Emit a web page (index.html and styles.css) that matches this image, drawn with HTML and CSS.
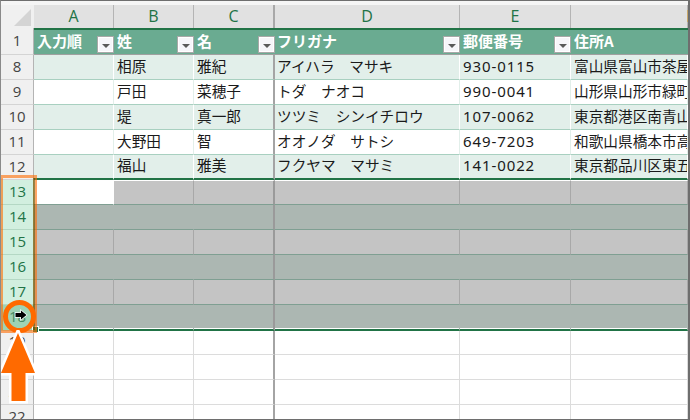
FILE: index.html
```html
<!DOCTYPE html>
<html lang="ja">
<head>
<meta charset="utf-8">
<title>Sheet</title>
<link rel="stylesheet" href="styles.css">
</head>
<body>
<div class="sheet">
  <div class="row head-row">
    <div class="rh corner"><svg class="corner-tri" width="17" height="17" viewBox="0 0 17 17"><path d="M17 0V17H0Z" fill="#d4d4d4"/></svg></div>
    <div class="c colh">A</div><div class="c colh">B</div><div class="c colh fz">C</div><div class="c colh">D</div><div class="c colh">E</div><div class="c colh"></div>
  </div>
  <div class="row title-row">
    <div class="rh">1</div>
    <div class="c tc">入力順<span class="fb"><i></i></span></div>
    <div class="c tc">姓<span class="fb"><i></i></span></div>
    <div class="c tc fz">名<span class="fb"><i></i></span></div>
    <div class="c tc kana">フリガナ<span class="fb"><i></i></span></div>
    <div class="c tc">郵便番号<span class="fb"><i></i></span></div>
    <div class="c tc">住所A</div>
  </div>
  <div class="row odd"><div class="rh">8</div><div class="c"></div><div class="c">相原</div><div class="c fz">雅紀</div><div class="c kana">アイハラ　マサキ</div><div class="c num">930-0115</div><div class="c">富山県富山市茶屋</div></div>
  <div class="row even"><div class="rh">9</div><div class="c"></div><div class="c">戸田</div><div class="c fz">菜穂子</div><div class="c kana">トダ　ナオコ</div><div class="c num">990-0041</div><div class="c">山形県山形市緑町</div></div>
  <div class="row odd"><div class="rh">10</div><div class="c"></div><div class="c">堤</div><div class="c fz">真一郎</div><div class="c kana">ツツミ　シンイチロウ</div><div class="c num">107-0062</div><div class="c">東京都港区南青山</div></div>
  <div class="row even"><div class="rh">11</div><div class="c"></div><div class="c">大野田</div><div class="c fz">智</div><div class="c kana">オオノダ　サトシ</div><div class="c num">649-7203</div><div class="c">和歌山県橋本市高</div></div>
  <div class="row odd last"><div class="rh">12</div><div class="c"></div><div class="c">福山</div><div class="c fz">雅美</div><div class="c kana">フクヤマ　マサミ</div><div class="c num">141-0022</div><div class="c">東京都品川区東五</div></div>
  <div class="row sel lt first"><div class="rh on">13</div><div class="c active"></div><div class="c"></div><div class="c fz"></div><div class="c"></div><div class="c"></div><div class="c"></div></div>
  <div class="row sel dk"><div class="rh on">14</div><div class="c"></div><div class="c"></div><div class="c fz"></div><div class="c"></div><div class="c"></div><div class="c"></div></div>
  <div class="row sel lt"><div class="rh on">15</div><div class="c"></div><div class="c"></div><div class="c fz"></div><div class="c"></div><div class="c"></div><div class="c"></div></div>
  <div class="row sel dk"><div class="rh on">16</div><div class="c"></div><div class="c"></div><div class="c fz"></div><div class="c"></div><div class="c"></div><div class="c"></div></div>
  <div class="row sel lt"><div class="rh on">17</div><div class="c"></div><div class="c"></div><div class="c fz"></div><div class="c"></div><div class="c"></div><div class="c"></div></div>
  <div class="row sel dk endsel"><div class="rh on hot">18</div><div class="c"></div><div class="c"></div><div class="c fz"></div><div class="c"></div><div class="c"></div><div class="c"></div></div>
  <div class="row blank b19"><div class="rh">19</div><div class="c"></div><div class="c"></div><div class="c fz"></div><div class="c"></div><div class="c"></div><div class="c"></div></div>
  <div class="row blank"><div class="rh">20</div><div class="c"></div><div class="c"></div><div class="c fz"></div><div class="c"></div><div class="c"></div><div class="c"></div></div>
  <div class="row blank"><div class="rh">21</div><div class="c"></div><div class="c"></div><div class="c fz"></div><div class="c"></div><div class="c"></div><div class="c"></div></div>
  <div class="row blank"><div class="rh">22</div><div class="c"></div><div class="c"></div><div class="c fz"></div><div class="c"></div><div class="c"></div><div class="c"></div></div>
  <div class="tick"></div>
  <div class="handle"></div>
  <div class="hl"></div>
  <div class="circle"></div>
  <svg class="cursor" width="14" height="12" viewBox="0 0 14 12"><path d="M1.5 4H7V1.5L12.5 6L7 10.5V8H1.5Z" fill="#000" stroke="#fff" stroke-width="1.4" paint-order="stroke"/></svg>
  <svg class="arrow" width="37" height="75" viewBox="0 0 37 75"><path d="M18 3L35 43H25.5V71H11.5V43H1Z" fill="#ff6a00" stroke="#fff" stroke-width="5" stroke-linejoin="miter" paint-order="stroke"/></svg>
</div>
</body>
</html>
```
FILE: styles.css
```css
* { box-sizing: border-box; }
html, body { margin: 0; padding: 0; }
body { width: 690px; height: 420px; overflow: hidden; background: #fff; font-family: "Noto Sans CJK JP", "Noto Sans", sans-serif; }
.sheet { position: relative; width: 690px; height: 420px; padding-top: 4px; border-top: 1px solid #6e6e6e; border-left: 1px solid #8a8a8a; border-right: 2px solid #6e6e6e; border-bottom: 1px solid #6e6e6e; overflow: hidden; background: #f5f5f5; }
.row { display: grid; grid-template-columns: 33px 80px 80px 81px 185px 111px 1fr; height: 25px; font-size: 14.67px; color: #1a1a1a; background: #fff; }
.rh { display: flex; align-items: center; justify-content: center; padding-bottom: 3px; background: #f0f0f0; border-right: 1px solid #b4b4b4; border-bottom: 1px solid #d4d4d4; font-family: "Open Sans", sans-serif; font-size: 15px; color: #444; }
.c { display: flex; align-items: center; padding-left: 3px; padding-bottom: 2px; border-right: 1px solid #d8d8d8; border-bottom: 1px solid #d8d8d8; white-space: nowrap; overflow: hidden; position: relative; line-height: 1; }
.kana { padding-left: 2px; }
.fz { border-right: 2px solid #a4a4a4; }
.head-row { height: 23px; }
.corner { background: #f0f0f0; border-right: 0; border-bottom: 0; align-items: flex-start; justify-content: flex-start; padding: 4px 0 0 13px; }
.colh { background: #e1e1e1; color: #217346; justify-content: center; padding: 0 0 1px; border-right: 1px solid #b4b4b4; border-bottom: 0; font-family: "Open Sans", sans-serif; font-size: 16px; }
.colh.fz { border-right: 2px solid #a8a8a8; }
.title-row { height: 27px; }
.tc { background: #6aab91; color: #fff; font-weight: 700; font-size: 15px; border-top: 2px solid #217346; border-right: 0; border-bottom: 1px solid #a0a0a0; padding-bottom: 4px; overflow: visible; }
.tc.fz { border-right: 0; }
.fb { position: absolute; right: 0; top: 6px; width: 17px; height: 17px; background: #f6f6fa; border: 1px solid #a8a8a8; box-shadow: inset 0 0 0 1px #fff; display: block; }
.fb i { position: absolute; left: 4px; top: 7px; border: 4px solid transparent; border-top: 4px solid #5a5a5a; border-bottom: 0; }
.odd .c { background: #e2efea; border-right-color: #fff; border-bottom-color: #a8d0c0; }
.even .c { background: #fff; border-right-color: #e2efea; border-bottom-color: #a8d0c0; }
.odd .fz, .even .fz { border-right-color: #a4a4a4; }
.last .c { border-bottom: 2px solid #217346; }
.last .fz { border-right-color: #a4a4a4; }
.num { font-family: "Noto Sans", sans-serif; font-size: 15px; letter-spacing: .9px; }
.sel .rh.on { background: #d2efdf; color: #217346; border-right: 0; border-bottom-color: #b4d8c4; }
.sel .rh.hot { background: #9ed3b4; color: #4a8a66; }
.lt .c { background: #c4c4c4; border-right-color: #a8a8a8; border-bottom-color: #7f9f92; }
.dk .c { background: #acb7b2; border-right-color: #acb7b2; border-bottom-color: #7f9f92; }
.sel .fz { border-right-color: #9a9a9a; }
.first .c { border-top: 1px solid #fff; }
.first .active { background: #fff; border-right-color: #fff; border-bottom-color: #7f9f92; }
.endsel { height: 26px; }
.endsel .c { border-bottom: 2px solid #217346; box-shadow: inset 0 -1px 0 #fff; }
.blank { height: 25px; }
.blank .c { border-bottom-color: #dcdcdc; border-right-color: #dcdcdc; }
.blank .fz { border-right-color: #a4a4a4; }
.b19 { height: 24px; }
.tick { position: absolute; right: 0; top: 9px; width: 1px; height: 12px; background: #c9a86a; }
.handle { position: absolute; left: 32px; top: 326px; width: 5px; height: 5px; background: #217346; outline: 1px solid #fff; }
.hl { position: absolute; left: -1px; top: 174px; width: 37px; height: 158px; border: 3px solid rgba(255, 106, 0, .6); border-right-width: 2px; box-shadow: inset -2px 0 0 rgba(120, 90, 10, .75); }
.circle { position: absolute; left: 2px; top: 299px; width: 33px; height: 33px; border: 5px solid #ff6a00; border-radius: 50%; }
.cursor { position: absolute; left: 13px; top: 308px; }
.arrow { position: absolute; left: -1px; top: 329px; }
```
